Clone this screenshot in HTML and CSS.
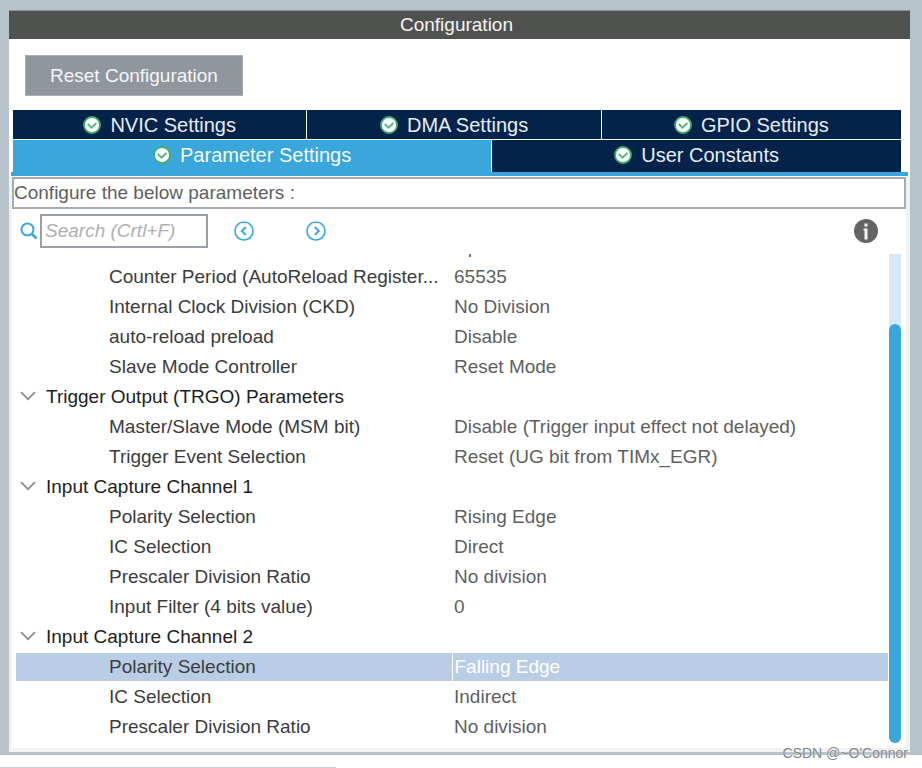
FILE: index.html
```
<!DOCTYPE html>
<html lang="en">
<head>
    <meta charset="UTF-8">
    <meta name="viewport" content="width=device-width, initial-scale=1.0">
    <title>Configuration</title>
    <link rel="stylesheet" href="styles.css">
</head>
<body>

    <!-- Shared icons -->
    <svg class="sprite" aria-hidden="true">
        <symbol id="ok" viewBox="0 0 18 18">
            <circle cx="9" cy="9" r="8" fill="#fff" stroke="#3fae6a" stroke-width="1.8"/>
            <path d="M4.8 8l3.7 3.7L13.4 7" fill="none" stroke="#4fb878" stroke-width="1.8"/>
        </symbol>
        <symbol id="chevron" viewBox="0 0 16 10">
            <path d="M1 1.2l7 7 7-7" fill="none" stroke="#8c8c8c" stroke-width="1.7"/>
        </symbol>
    </svg>

    <div class="frame">
        <main class="panel">
            <h1 class="title">Configuration</h1>

            <div class="actions">
                <button class="reset" type="button">Reset Configuration</button>
            </div>

            <div class="tabs" role="tablist">
                <div class="tab-row">
                    <button class="tab" role="tab" type="button"><svg class="ok"><use href="#ok"/></svg>NVIC Settings</button>
                    <button class="tab" role="tab" type="button"><svg class="ok"><use href="#ok"/></svg>DMA Settings</button>
                    <button class="tab tab-last" role="tab" type="button"><svg class="ok"><use href="#ok"/></svg>GPIO Settings</button>
                </div>
                <div class="tab-row tab-row-front">
                    <button class="tab tab-wide tab-active" role="tab" type="button" aria-selected="true"><svg class="ok"><use href="#ok"/></svg>Parameter Settings</button>
                    <button class="tab" role="tab" type="button"><svg class="ok"><use href="#ok"/></svg>User Constants</button>
                </div>
            </div>

            <section class="content">
                <p class="hint">Configure the below parameters :</p>

                <div class="toolbar">
                    <label class="search-label" for="search" aria-label="Search">
                        <svg width="18" height="18" viewBox="0 0 18 18" fill="none" stroke="#3aa7dc">
                            <circle cx="7.5" cy="7.5" r="6" stroke-width="2"/>
                            <path d="M12 12l4.500 4.500" stroke-width="2.5"/>
                        </svg>
                    </label>
                    <input class="search" id="search" type="text" placeholder="Search (Crtl+F)">
                    <button class="icon-button prev" type="button" aria-label="Previous">
                        <svg width="20" height="20" viewBox="0 0 20 20" fill="none" stroke="#3aa7dc">
                            <circle cx="10" cy="10" r="9" stroke-width="1.6"/>
                            <path d="M11.8 6l-4 4 4 4" stroke-width="1.9"/>
                        </svg>
                    </button>
                    <button class="icon-button next" type="button" aria-label="Next">
                        <svg width="20" height="20" viewBox="0 0 20 20" fill="none" stroke="#3aa7dc">
                            <circle cx="10" cy="10" r="9" stroke-width="1.6"/>
                            <path d="M8.800 6l4 4-4 4" stroke-width="1.9"/>
                        </svg>
                    </button>
                    <button class="icon-button info" type="button" aria-label="Information">
                        <svg width="24" height="24" viewBox="0 0 24 24">
                            <circle cx="12" cy="12" r="12" fill="#646464"/>
                            <path d="M10.500 4.500h3v3h-3zM9.500 9.500h4v11h-3v-9h-1z" fill="#f4f4f4"/>
                        </svg>
                    </button>
                </div>

                <div class="list">
                    <div class="list-view">
                        <table class="params">
                            <colgroup>
                                <col class="col-name">
                                <col>
                            </colgroup>
                            <tbody>
                                <tr><td>Counter Mode</td><td>Up</td></tr>
                                <tr><td>Counter Period (AutoReload Register...</td><td>65535</td></tr>
                                <tr><td>Internal Clock Division (CKD)</td><td>No Division</td></tr>
                                <tr><td>auto-reload preload</td><td>Disable</td></tr>
                                <tr><td>Slave Mode Controller</td><td>Reset Mode</td></tr>
                                <tr><th colspan="2"><svg class="chevron"><use href="#chevron"/></svg>Trigger Output (TRGO) Parameters</th></tr>
                                <tr><td>Master/Slave Mode (MSM bit)</td><td>Disable (Trigger input effect not delayed)</td></tr>
                                <tr><td>Trigger Event Selection</td><td>Reset (UG bit from TIMx_EGR)</td></tr>
                                <tr><th colspan="2"><svg class="chevron"><use href="#chevron"/></svg>Input Capture Channel 1</th></tr>
                                <tr><td>Polarity Selection</td><td>Rising Edge</td></tr>
                                <tr><td>IC Selection</td><td>Direct</td></tr>
                                <tr><td>Prescaler Division Ratio</td><td>No division</td></tr>
                                <tr><td>Input Filter (4 bits value)</td><td>0</td></tr>
                                <tr><th colspan="2"><svg class="chevron"><use href="#chevron"/></svg>Input Capture Channel 2</th></tr>
                                <tr class="selected"><td>Polarity Selection</td><td>Falling Edge</td></tr>
                                <tr><td>IC Selection</td><td>Indirect</td></tr>
                                <tr><td>Prescaler Division Ratio</td><td>No division</td></tr>
                            </tbody>
                        </table>
                    </div>
                    <div class="scrollbar"><div class="thumb"></div></div>
                </div>
            </section>
        </main>
    </div>

    <footer class="footer">
        <span class="watermark">CSDN @~O'Connor</span>
    </footer>

</body>
</html>
```
FILE: styles.css
```
/* General Styles */
* {
    box-sizing: border-box;
}

body {
    margin: 0;
    min-height: 100vh;
    display: flex;
    flex-direction: column;
    background: #ffffff;
    color: #3c3c3c;
    font-family: "Liberation Sans", Arial, sans-serif;
    font-size: 19px;
    line-height: 30px;
}

button, input {
    font: inherit;
    margin: 0;
    border: 0;
    border-radius: 0;
}

svg {
    display: block;
    flex: none;
}

.sprite {
    position: absolute;
    width: 0;
    height: 0;
}

/* Window frame */
.frame {
    background: #b7c3ca;
    padding: 10px 12px 3px 9px;
}

.panel {
    background: #ffffff;
}

.title {
    margin: 0;
    border-top: 1px solid #8a9696;
    background: #505250;
    color: #f4f4f4;
    font-size: 19px;
    font-weight: normal;
    line-height: 28px;
    text-align: center;
    padding-right: 6px;
}

.actions {
    padding: 16px 16px 14px;
    display: flex;
}

.reset {
    height: 41px;
    padding: 0 24px;
    border: 1px solid #a9aeb2;
    background: #90979c;
    color: #f4f6f7;
}

/* Tabs */
.tabs {
    padding: 0 2px;
    border-bottom: 4px solid #3aa7dc;
    margin: 0 2px;
}

.tab-row {
    display: flex;
    gap: 1px;
    padding-right: 5px;
    margin-bottom: 1px;
}

.tab-row-front {
    margin-bottom: 0;
}

.tab {
    flex: 1;
    display: flex;
    align-items: center;
    justify-content: center;
    gap: 9px;
    height: 29px;
    padding: 0;
    background: #03234b;
    color: #e8edf2;
    font-size: 20px;
}

.tab-last {
    flex: 1.02;
}

.tab-row-front .tab {
    height: 32px;
    padding-bottom: 2px;
}

.tab-row-front .tab-wide {
    flex: 1.17;
}

.tab-active {
    background: #3aa7dc;
    color: #f2f9fd;
}

.ok {
    width: 18px;
    height: 18px;
}

/* Content */
.content {
    padding: 1px 4px 4px 3px;
    background: linear-gradient(#f0f2f4, #f0f2f4) left / 3px 100% no-repeat,
        linear-gradient(#f0f2f4, #f0f2f4) right / 4px 100% no-repeat,
        linear-gradient(#f0f2f4, #f0f2f4) bottom / 100% 4px no-repeat;
}

.hint {
    margin: 0;
    border: 2px solid #a7acb2;
    color: #5f5f5f;
    line-height: 28px;
}

.toolbar {
    display: flex;
    align-items: center;
    padding: 5px 28px 6px 8px;
}

.search-label {
    margin-right: 2px;
}

.search {
    width: 168px;
    height: 34px;
    padding: 0 3px;
    border: 2px solid #9aa0a6;
    background: #ffffff;
    color: #3c3c3c;
}

.search::placeholder {
    color: #b0b0b0;
    font-style: italic;
    opacity: 1;
}

.icon-button {
    padding: 0;
    background: none;
}

.prev {
    margin-left: 26px;
}

.next {
    margin-left: 52px;
}

.info {
    margin-left: auto;
}

/* Parameter list */
.list {
    display: flex;
    gap: 1px;
    padding: 0 5px 5px 4px;
}

.list-view {
    flex: 1;
    min-width: 0;
    overflow: hidden;
}

/* Scrolled down, so the first row is mostly out of view */
.params {
    width: 100%;
    margin-top: -22px;
    table-layout: fixed;
    border-collapse: collapse;
}

.col-name {
    width: 50%;
}

.params td, .params th {
    height: 30px;
    padding: 0;
    line-height: 28px;
    border-bottom: 2px solid #ffffff;
    font-weight: normal;
    text-align: left;
    white-space: nowrap;
    overflow: hidden;
    text-overflow: ellipsis;
}

.params td:first-child {
    padding-left: 93px;
}

.params td:last-child {
    padding-left: 2px;
    color: #5f5f5f;
}

.params th {
    color: #1e1e1e;
}

.chevron {
    display: inline-block;
    width: 16px;
    height: 10px;
    margin: 0 10px 2px 4px;
}

.params .selected td {
    background: #b9cee6;
}

.params .selected td:last-child {
    border-left: 1px solid #ffffff;
    color: #ffffff;
}

.scrollbar {
    width: 12px;
    padding-top: 70px;
    background: #d9e8f5;
    display: flex;
    border-radius: 0 0 6px 6px;
}

.thumb {
    flex: 1;
    border-radius: 6px;
    background: #3aa7dc;
}

/* Footer */
.footer {
    flex: 1;
    position: relative;
    background: linear-gradient(#d0d0d0, #d0d0d0) left bottom / 336px 1px no-repeat;
}

.watermark {
    position: absolute;
    right: 14px;
    bottom: 6px;
    color: #858585;
    font-size: 14px;
    line-height: 18px;
    text-shadow: 0 0 1px #ffffff;
}
```
